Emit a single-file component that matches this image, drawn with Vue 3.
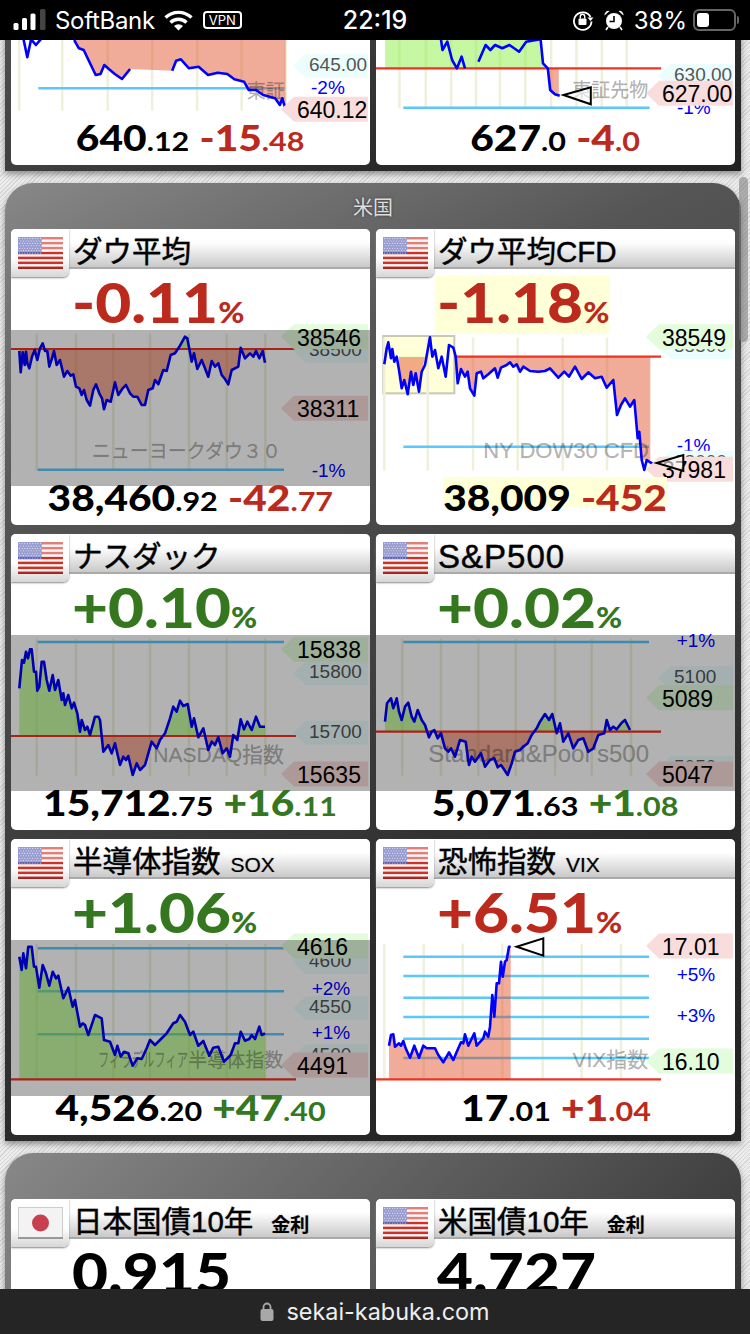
<script setup>
// points below are read off the reference, chart coords get worked out in prep()
const zoomed = (card) => ({ ox: card === 'l' ? 33 : 3, sx: 3, oy: -105, sy: 3 })
const topRow = (card) => ({ ox: card === 'l' ? 23 : 786, sx: 2.09, oy: -510, sy: 3 })

const parse = (str, m) =>
  str.trim().split(/\s+/).map((p) => {
    const [x, y] = p.split(',').map(Number)
    return [(x - m.ox) / m.sx, (y - m.oy) / m.sy - 140]
  })

const prep = (c) => {
  const m = c.map
  const px = (x) => (x - m.ox) / m.sx
  const py = (y) => (y - m.oy) / m.sy - 140
  const lines = c.lines.map((l) => parse(l, m))
  const source = c.fillPts ? parse(c.fillPts, m) : lines.flat()
  const base = py(c.base)
  const last = source[source.length - 1]
  const area = [...source, [last[0], base], [source[0][0], base]]
  const toStr = (a) => a.map((p) => p[0].toFixed(1) + ',' + p[1].toFixed(1)).join(' ')
  const tags = c.tags.map((t) => {
    const cy = py(t.y)
    const main = t.kind !== 'grid'
    const left = main ? 270 : 282
    const h = main ? 12.5 : 12
    return {
      ...t,
      main,
      tx: main ? 286 : 298,
      ty: cy + (main ? 9 : 5),
      poly: `${left},${cy} ${left + 13},${cy - h} 357,${cy - h} 357,${cy + h} ${left + 13},${cy + h}`
    }
  })
  return {
    ...c,
    baseY: base,
    baseX: [px(c.baseX[0]), px(c.baseX[1])],
    linesStr: lines.map(toStr),
    areaStr: toStr(area),
    gridX: c.grid.map(px),
    gridY: [py(c.gridY[0]), py(c.gridY[1])],
    hlineY: (c.hlines || []).map(py),
    hlineX: [px(c.hlineX[0]), px(c.hlineX[1])],
    tagList: tags,
    rates: (c.rates || []).map((r) => ({ t: r.t, x: px(r.x), y: py(r.y) })),
    markerStr: c.marker ? toStr(parse(c.marker, m)) : '',
    boxRect: c.box ? { x: px(c.box[0]), y: py(c.box[1]), w: (c.box[2] - c.box[0]) / m.sx, h: (c.box[3] - c.box[1]) / m.sy } : null,
    mark: { ...c.mark, x: px(c.mark.x), y: py(c.mark.y) }
  }
}

const dowGrid = [110, 228, 340, 450, 567, 680, 796]
const spGrid = [82, 198, 310, 422, 540, 650, 768]

const topCards = [
  {
    id: 'tse', title: '東証', flag: 'jp', value: '640', dec: '.12', ch: '-15', chDec: '.48', dir: 'down',
    chart: prep({
      id: 'tse', map: topRow('l'), base: 100, baseX: [23, 23],
      lines: ['48,110 57,172 65,118 75,135 85,118', '155,120 165,145 175,150 190,195 200,225 210,222 218,195 228,208 240,222 255,237 272,207', '360,212 368,182 378,178 395,205 415,200 435,225 455,218 475,222 490,238 510,245 520,270 535,270 550,285 575,295 585,315 590,295 597,328'],
      fillPts: '155,100 155,120 165,145 175,150 190,195 200,225 210,222 218,195 228,208 240,222 255,237 272,207 360,212 368,182 378,178 395,205 415,200 435,225 455,218 475,222 490,238 510,245 520,270 535,270 550,285 575,295 585,315 590,295 597,328',
      grid: [40, 130, 225, 318, 412, 505, 597], gridY: [100, 332], hlines: [265], hlineX: [80, 595],
      rates: [{ t: '-2%', x: 650, y: 283 }],
      tags: [{ t: '645.00', y: 197, kind: 'grid' }, { t: '640.12', y: 328, kind: 'down' }],
      mark: { t: '東証', x: 595, y: 293, size: 19 }, up: 'red'
    })
  },
  {
    id: 'tsef', title: '東証先物', flag: 'jp', value: '627', dec: '.0', ch: '-4', chDec: '.0', dir: 'down',
    chart: prep({
      id: 'tsef', map: topRow('r'), base: 205, baseX: [786, 1382],
      lines: ['920,100 925,150 935,125 945,180 955,205 965,170 972,205', '1000,185 1015,135 1025,150 1035,135 1050,145 1065,135 1085,155 1100,125 1130,118 1135,190 1145,205 1150,270 1160,283 1170,287'],
      fillPts: '805,100 1132,100 1135,190 1145,205 1150,270 1160,283 1168,287',
      grid: [835, 890, 943, 995, 1045, 1098, 1152, 1205, 1258, 1310], gridY: [100, 325], hlines: [323], hlineX: [843, 1358],
      rates: [{ t: '-1%', x: 1415, y: 343 }],
      tags: [{ t: '630.00', y: 228, kind: 'grid' }, { t: '627.00', y: 280, kind: 'down' }],
      marker: '1178,285 1235,262 1235,313',
      mark: { t: '東証先物', x: 1355, y: 290, size: 19 }
    })
  }
]

const usCards = [
  {
    id: 'dow', title: 'ダウ平均', flag: 'us', pct: '-0.11', value: '38,460', dec: '.92', ch: '-42', chDec: '.77', dir: 'down',
    chart: prep({
      id: 'dow', map: zoomed('l'), closed: true, base: 372, baseX: [33, 888],
      lines: ['58,378 62,442 68,382 74,420 78,380 82,415 88,430 96,395 104,375 112,405 120,370 128,355 135,378 142,378 148,425 156,400 162,378 170,420 180,405 192,455 202,438 212,452 220,448 228,485 238,490 245,510 252,495 260,525 270,542 280,495 288,478 298,505 306,520 312,553 320,525 332,530 345,472 355,510 368,490 378,480 390,505 400,515 412,515 425,540 435,540 445,495 458,490 465,465 475,478 490,435 500,438 512,390 525,385 540,362 555,335 562,340 575,410 582,385 592,432 605,405 625,455 635,408 645,425 655,415 665,450 675,462 685,478 695,435 715,425 722,368 735,400 750,385 760,395 768,378 778,400 788,378 795,413'],
      grid: dowGrid, gridY: [326, 737], hlines: [734], hlineX: [113, 852],
      rates: [{ t: '-1%', x: 935, y: 755 }],
      tags: [{ t: '38500', y: 377, kind: 'grid' }, { t: '38546', y: 335, kind: 'up' }, { t: '38311', y: 550, kind: 'down' }],
      mark: { t: 'ニューヨークダウ３０', x: 843, y: 700, size: 19 }
    })
  },
  {
    id: 'cfd', title: 'ダウ平均CFD', flag: 'us', pct: '-1.18', value: '38,009', dec: '', ch: '-452', chDec: '', dir: 'down', hl: true,
    chart: prep({
      id: 'cfd', map: zoomed('r'), base: 395, baseX: [238, 858],
      lines: ['28,418 35,370 40,352 48,400 52,372 58,410 65,395 72,435 80,490 88,465 98,508 108,440 115,480 122,445 132,500 140,440 150,420 165,337 172,395 180,375 190,430 200,395 212,455 222,360 235,368 242,395 248,475 258,432 270,455 278,440 285,490 298,512 305,445 318,440 325,460 340,448 360,430 368,458 378,428 395,420 405,412 415,425 425,418 435,440 445,425 465,438 490,440 510,438 525,430 550,458 568,440 582,455 600,425 620,462 640,442 660,460 680,455 695,488 715,465 726,570 738,540 750,520 765,545 778,525 788,640 793,620 800,705 808,735 815,705 832,716'],
      fillPts: '72,395 72,435 80,490 88,465 98,508 108,440 115,480 122,445 132,500 140,440 150,395 242,395 248,475 258,432 270,455 278,440 285,490 298,512 305,445 318,440 325,460 340,448 360,430 368,458 378,428 395,420 405,412 415,425 425,418 435,440 445,425 465,438 490,440 510,438 525,430 550,458 568,440 582,455 600,425 620,462 640,442 660,460 680,455 695,488 715,465 726,570 738,540 750,520 765,545 778,525 788,640 793,620 800,705 826,705',
      box: [25, 333, 238, 505],
      grid: [28, 158, 294, 428, 563, 696], gridY: [338, 737], hlines: [665], hlineX: [85, 822],
      rates: [{ t: '-1%', x: 905, y: 680 }],
      tags: [{ t: '38500', y: 366, kind: 'grid' }, { t: '38549', y: 335, kind: 'up' }, { t: '38000', y: 713, kind: 'grid' }, { t: '37981', y: 733, kind: 'down' }],
      marker: '845,714 925,690 925,738',
      mark: { t: 'NY DOW30 CFD', x: 822, y: 700, size: 22 }
    })
  },
  {
    id: 'nas', title: 'ナスダック', flag: 'us', pct: '+0.10', value: '15,712', dec: '.75', ch: '+16', chDec: '.11', dir: 'up',
    chart: prep({
      id: 'nas', map: zoomed('l'), closed: true, base: 618, baseX: [33, 888],
      lines: ['58,475 66,390 72,398 78,365 84,385 90,358 95,358 102,425 108,425 112,482 118,470 125,395 132,395 140,450 148,482 158,435 165,480 175,450 185,510 190,490 195,525 205,495 215,535 222,518 232,550 240,605 245,570 255,600 262,590 270,615 285,560 295,560 300,570 310,665 325,645 335,670 345,640 360,705 370,680 378,690 385,678 398,735 410,700 420,720 435,705 445,670 455,635 470,655 480,630 495,610 510,565 520,530 530,545 540,512 550,528 563,522 575,590 582,565 595,622 610,595 625,660 635,635 645,645 655,622 668,670 680,655 690,680 700,615 712,630 722,568 732,598 742,575 755,600 768,560 780,590 795,590'],
      grid: dowGrid, gridY: [326, 737], hlines: [336], hlineX: [113, 852],
      tags: [{ t: '15800', y: 430, kind: 'grid' }, { t: '15700', y: 608, kind: 'grid' }, { t: '15838', y: 358, kind: 'up' }, { t: '15635', y: 732, kind: 'down' }],
      mark: { t: 'NASDAQ指数', x: 852, y: 697, size: 21 }
    })
  },
  {
    id: 'sp', title: 'S&P500', titleWide: true, flag: 'us', pct: '+0.02', value: '5,071', dec: '.63', ch: '+1', chDec: '.08', dir: 'up',
    chart: prep({
      id: 'sp', map: zoomed('r'), closed: true, base: 605, baseX: [3, 858],
      lines: ['30,575 36,520 48,505 55,535 65,505 72,545 80,570 90,530 100,518 110,560 118,575 128,540 140,570 150,585 162,622 170,605 178,600 188,625 198,610 210,655 220,665 228,655 240,680 255,630 272,635 282,705 290,680 300,695 318,670 330,710 345,690 358,685 368,712 378,705 385,715 398,735 410,700 420,665 435,660 445,650 458,640 470,615 485,595 495,575 510,552 522,570 532,552 545,610 555,580 565,635 580,610 595,655 610,630 625,625 640,665 655,655 670,615 688,610 695,570 705,600 715,590 725,598 740,578 750,570 765,600'],
      grid: spGrid, gridY: [326, 737], hlines: [336], hlineX: [85, 822],
      rates: [{ t: '+1%', x: 905, y: 352 }],
      tags: [{ t: '5100', y: 445, kind: 'grid' }, { t: '5050', y: 713, kind: 'grid' }, { t: '5089', y: 503, kind: 'up' }, { t: '5047', y: 732, kind: 'down' }],
      mark: { t: "Standard&Poor's500", x: 822, y: 697, size: 24 }
    })
  },
  {
    id: 'sox', title: '半導体指数', sub: 'SOX', flag: 'us', pct: '+1.06', value: '4,526', dec: '.20', ch: '+47', chDec: '.40', dir: 'up',
    chart: prep({
      id: 'sox', map: zoomed('l'), closed: true, base: 733, baseX: [33, 888],
      lines: ['58,365 65,405 70,355 78,400 85,335 95,335 102,395 108,395 118,458 128,390 138,415 148,452 158,410 168,430 175,422 190,490 205,458 218,515 225,495 240,575 248,565 255,570 265,600 285,540 305,550 312,615 330,620 345,660 352,632 362,665 372,650 385,655 398,692 412,670 425,672 440,640 450,615 465,630 480,615 500,595 520,565 530,560 540,540 555,560 570,600 580,590 595,632 610,618 628,662 640,638 655,635 672,680 692,660 705,625 715,625 722,590 735,617 748,612 755,600 765,612 778,575 785,600 795,595'],
      grid: dowGrid, gridY: [326, 737], hlines: [340, 469, 598], hlineX: [113, 852],
      rates: [{ t: '+2%', x: 935, y: 480 }, { t: '+1%', x: 935, y: 612 }],
      tags: [{ t: '4600', y: 381, kind: 'grid' }, { t: '4550', y: 520, kind: 'grid' }, { t: '4500', y: 664, kind: 'grid' }, { t: '4616', y: 333, kind: 'up' }, { t: '4491', y: 690, kind: 'down' }],
      mark: { t: '半導体指数', x: 850, y: 697, size: 19, pre: 'フィラデルフィア', preX: 295 }
    })
  },
  {
    id: 'vix', title: '恐怖指数', sub: 'VIX', flag: 'us', pct: '+6.51', value: '17', dec: '.01', ch: '+1', chDec: '.04', dir: 'down', sign: true,
    chart: prep({
      id: 'vix', map: zoomed('r'), base: 733, baseX: [3, 858], up: 'red',
      lines: ['42,632 48,600 55,598 60,635 72,625 78,632 85,618 92,640 105,668 118,632 132,668 145,632 155,640 165,640 180,640 190,660 205,682 222,652 235,675 250,640 258,622 265,625 270,598 280,632 298,595 305,632 325,610 330,590 340,605 345,575 352,480 358,545 365,445 372,445 378,380 383,425 390,380 395,375 402,335 407,335'],
      grid: [28, 146, 263, 382, 503, 620, 738], gridY: [326, 733], hlines: [365, 423, 488, 546, 611, 669], hlineX: [85, 822],
      rates: [{ t: '+5%', x: 905, y: 438 }, { t: '+3%', x: 905, y: 562 }],
      tags: [{ t: '17.01', y: 333, kind: 'down' }, { t: '16.10', y: 678, kind: 'up' }],
      marker: '425,335 505,310 505,362',
      mark: { t: 'VIX指数', x: 820, y: 697, size: 21 }
    })
  }
]

const bondCards = [
  { id: 'jgb', title: '日本国債10年', sub: '金利', subJa: true, flag: 'jp', pct: '0.915', dir: 'flat' },
  { id: 'ust', title: '米国債10年', sub: '金利', subJa: true, flag: 'us', pct: '4.727', dir: 'flat' }
]

const panels = [
  { id: 'jp', title: '日本', cls: 'first', cards: topCards },
  { id: 'us', title: '米国', cls: '', cards: usCards },
  { id: 'bond', title: '', cls: 'last', cards: bondCards }
]

const upColor = (c) => (c.up === 'red' ? 'rgba(225,70,30,.45)' : 'rgba(140,240,70,.5)')
const stripes = [0, 1, 2, 3, 4, 5, 6, 7, 8, 9, 10, 11, 12]
const stars = []
for (let r = 0; r < 7; r++) for (let k = 0; k < 9; k++) stars.push([1.6 + k * 2.6 + (r % 2) * 1.3, 1.6 + r * 2.4])
</script>

<template>
  <div class="page">
    <header class="status">
      <div class="st-left">
        <svg class="signal" width="33" height="22" viewBox="0 0 33 22">
          <rect x="0.5" y="14" width="5" height="7" rx="1.5" fill="#fff" />
          <rect x="9" y="9" width="5" height="12" rx="1.5" fill="#fff" />
          <rect x="17.5" y="4.500" width="5" height="16.500" rx="1.500" fill="#fff" />
          <rect x="27" y="0" width="5.500" height="21" rx="1.500" fill="#444" />
        </svg>
        <span class="carrier">SoftBank</span>
        <svg class="wifi" width="29" height="22" viewBox="0 0 29 22">
          <path d="M1.5 8.500A19 19 0 0 1 27.500 8.500" fill="none" stroke="#fff" stroke-width="3.400" />
          <path d="M6.500 13.500A11.500 11.500 0 0 1 22.500 13.500" fill="none" stroke="#fff" stroke-width="3.400" />
          <path d="M14.500 21.500L10 17A6.500 6.500 0 0 1 19 17Z" fill="#fff" />
        </svg>
        <span class="vpn">VPN</span>
      </div>
      <div class="time">22:19</div>
      <div class="st-right">
        <svg width="22" height="22" viewBox="0 0 22 22">
          <path d="M18.500 8A8.800 8.800 0 1 0 19.500 12.500" fill="none" stroke="#fff" stroke-width="1.800" />
          <path d="M15.500 8.500h6l-3 3.500z" fill="#fff" />
          <rect x="6.500" y="9.500" width="8" height="6.500" rx="1" fill="#fff" />
          <path d="M8.300 9.500V7.500a2.200 2.200 0 0 1 4.400 0V9.500" fill="none" stroke="#fff" stroke-width="1.400" />
        </svg>
        <svg class="alarm" width="22" height="22" viewBox="0 0 22 22">
          <circle cx="11" cy="12" r="8" fill="#fff" />
          <path d="M11 7v5.500H6.500" fill="none" stroke="#000" stroke-width="1.600" />
          <path d="M1.500 6.500A4 4 0 0 1 6.500 2zM20.500 6.500A4 4 0 0 0 15.500 2z" fill="#fff" />
          <path d="M5 18l-2 3M17 18l2 3" stroke="#fff" stroke-width="1.600" />
        </svg>
        <span class="batt-pct">38%</span>
        <span class="battery"><span class="batt-fill"></span></span>
        <span class="batt-nub"></span>
      </div>
    </header>

    <main class="content">
      <section v-for="p in panels" :key="p.id" class="panel" :class="p.cls">
        <div class="panel-title">{{ p.title }}</div>
        <div class="grid">
          <article v-for="c in p.cards" :key="c.id" class="card">
            <div class="card-head">
              <div class="flag-tab">
                <svg v-if="c.flag === 'us'" class="flag" width="45" height="32" viewBox="0 0 45 32">
                  <rect width="45" height="32" fill="#f4f4f4" />
                  <rect v-for="s in stripes" v-show="s % 2 === 0" :key="s" y="0" :transform="`translate(0 ${s * 2.46})`" width="45" height="2.46" fill="#cf3127" />
                  <rect width="24" height="17" fill="#5a5fb0" />
                  <circle v-for="(st, i) in stars" :key="i" :cx="st[0]" :cy="st[1]" r=".55" fill="#dfe0f4" />
                  <rect width="45" height="15" fill="#fff" opacity=".38" />
                  <rect y="30.500" width="45" height="1.500" fill="#7a1d18" opacity=".6" />
                </svg>
                <svg v-else class="flag" width="45" height="32" viewBox="0 0 45 32">
                  <rect x=".5" y=".5" width="44" height="31" fill="#f3f3f3" stroke="#ccc" />
                  <rect y="30" width="45" height="2" fill="#999" />
                  <circle cx="22.500" cy="16" r="8.500" fill="#c8404f" />
                </svg>
              </div>
              <h2 class="title" :class="{ wide: c.titleWide }">{{ c.title }}<small v-if="c.sub" class="sub" :class="{ ja: c.subJa }">{{ c.sub }}</small></h2>
            </div>

            <div class="pct-row" :class="c.dir">
              <span v-if="c.pct" class="pct" :class="{ hl: c.hl }">{{ c.pct }}<small v-if="c.dir !== 'flat'">%</small></span>
            </div>

            <svg v-if="c.chart" class="chart" width="359" height="156" viewBox="0 0 359 156">
              <defs>
                <linearGradient :id="'fill-' + c.id" gradientUnits="userSpaceOnUse" x1="0" x2="0" :y1="c.chart.baseY - 1" :y2="c.chart.baseY + 1">
                  <stop offset=".5" :stop-color="upColor(c.chart)" />
                  <stop offset=".5" stop-color="rgba(225,70,30,.45)" />
                </linearGradient>
              </defs>
              <rect v-if="c.chart.boxRect" :x="c.chart.boxRect.x" :y="c.chart.boxRect.y" :width="c.chart.boxRect.w" :height="c.chart.boxRect.h" fill="#ffffd8" stroke="#c8c8b4" stroke-width="2" />
              <line v-for="x in c.chart.gridX" :key="x" :x1="x" :x2="x" :y1="c.chart.gridY[0]" :y2="c.chart.gridY[1]" class="vgrid" />
              <line v-for="y in c.chart.hlineY" :key="y" :x1="c.chart.hlineX[0]" :x2="c.chart.hlineX[1]" :y1="y" :y2="y" class="hline" />
              <polygon :points="c.chart.areaStr" :fill="`url(#fill-${c.id})`" />
              <text class="mark" :x="c.chart.mark.x" :y="c.chart.mark.y" :font-size="c.chart.mark.size" text-anchor="end">{{ c.chart.mark.t }}</text>
              <text v-if="c.chart.mark.pre" class="mark" x="87" :y="c.chart.mark.y" font-size="19" textLength="90" lengthAdjust="spacingAndGlyphs">{{ c.chart.mark.pre }}</text>
              <line class="base" :x1="c.chart.baseX[0]" :x2="c.chart.baseX[1]" :y1="c.chart.baseY" :y2="c.chart.baseY" />
              <polyline v-for="(l, i) in c.chart.linesStr" :key="i" :points="l" class="price" />
              <text v-for="r in c.chart.rates" :key="r.t" class="rate" :x="r.x" :y="r.y">{{ r.t }}</text>
              <g v-for="t in c.chart.tagList" :key="t.t">
                <polygon :points="t.poly" :class="'tag-' + t.kind" />
                <text :class="t.main ? 'tag-main' : 'tag-grid'" :x="t.tx" :y="t.ty">{{ t.t }}</text>
              </g>
              <polygon v-if="c.chart.markerStr" :points="c.chart.markerStr" class="marker" />
              <rect v-if="c.chart.closed" class="closed" x="0" y="0" width="359" height="156" />
            </svg>

            <div v-if="c.value" class="bottom">
              <span class="values" :class="{ hl: c.hl }">
                <span class="val">{{ c.value }}<small>{{ c.dec }}</small></span>
                <span class="chg" :class="c.dir">{{ c.ch }}<small>{{ c.chDec }}</small></span>
              </span>
            </div>
          </article>
        </div>
      </section>
      <div class="scroll-thumb"></div>
    </main>

    <footer class="url-bar">
      <svg width="14" height="19" viewBox="0 0 14 19">
        <rect x="0.500" y="7" width="13" height="12" rx="2" fill="#a8a8a8" />
        <path d="M3.500 8V5a3.500 3.500 0 0 1 7 0v3" fill="none" stroke="#a8a8a8" stroke-width="1.800" />
      </svg>
      <span>sekai-kabuka.com</span>
    </footer>
  </div>
</template>

<style scoped>
.page {
  width: 750px;
  height: 1334px;
  display: flex;
  flex-direction: column;
  overflow: hidden;
  font-family: Lato, "Noto Sans CJK JP", sans-serif;
}

.status {
  height: 40px;
  flex: none;
  position: relative;
  z-index: 2;
  background: #000;
  color: #fff;
  display: grid;
  grid-template-columns: 1fr auto 1fr;
  align-items: center;
  font-family: Inter, Roboto, sans-serif;
}
.st-left {
  display: flex;
  align-items: center;
  padding-left: 13px;
}
.carrier {
  font-size: 24px;
  margin-left: 9px;
  letter-spacing: -.3px;
}
.wifi { margin-left: 9px; }
.vpn {
  margin-left: 10px;
  width: 39px;
  height: 18px;
  box-sizing: border-box;
  border: 2px solid #fff;
  border-radius: 4px;
  font-size: 13px;
  line-height: 14px;
  text-align: center;
}
.time {
  font-size: 25px;
  font-weight: 500;
}
.st-right {
  display: flex;
  align-items: center;
  justify-content: flex-end;
  padding-right: 11px;
}
.alarm { margin-left: 9px; }
.batt-pct {
  font-size: 24px;
  margin-left: 9px;
}
.battery {
  margin-left: 6px;
  width: 43px;
  height: 22px;
  box-sizing: border-box;
  border: 2px solid #666;
  border-radius: 6px;
  padding: 2px;
}
.batt-fill {
  display: block;
  width: 12px;
  height: 14px;
  background: #fff;
  border-radius: 3px;
}
.batt-nub {
  width: 2px;
  height: 8px;
  margin-left: 1px;
  background: #666;
  border-radius: 0 2px 2px 0;
}

.content {
  flex: 1;
  min-height: 0;
  position: relative;
  overflow: hidden;
  padding: 0 9px 0 5px;
  background: repeating-linear-gradient(135deg, #d6d6d6 0, #d6d6d6 1px, #ececec 1px, #ececec 3px);
}
.scroll-thumb {
  position: absolute;
  top: 137px;
  right: 2px;
  width: 9px;
  height: 165px;
  border-radius: 5px;
  background: rgba(120, 120, 120, .55);
}

.panel {
  border-radius: 28px 28px 0 0;
  padding: 0 6px 6px;
  margin-bottom: 12px;
  background: linear-gradient(155deg, #888 0, #555 25%, #2a2a2a 75%, #222 100%);
  box-shadow: 0 3px 6px rgba(0, 0, 0, .4);
}
.panel.first {
  margin-top: -217px;
}
.panel.last {
  background: linear-gradient(135deg, #888, #222);
}
.panel-title {
  height: 46px;
  line-height: 48px;
  text-align: center;
  font-size: 20px;
  color: #ddd;
  text-shadow: 0 0 3px rgba(0, 0, 0, .5);
}
.grid {
  display: grid;
  grid-template-columns: 359px 359px;
  column-gap: 6px;
  row-gap: 9px;
}

.card {
  position: relative;
  height: 296px;
  background: #fff;
  border-radius: 5px;
}
.card-head {
  height: 40px;
  box-sizing: border-box;
  border-bottom: 2px solid #aaa;
  border-radius: 5px 5px 0 0;
  background: linear-gradient(#fff 35%, #c9c9c9);
  padding-left: 62px;
}
.flag-tab {
  position: absolute;
  left: 0;
  top: 0;
  width: 58px;
  height: 48px;
  box-sizing: border-box;
  padding: 8px 0 0 7px;
  border-radius: 5px 0 6px 0;
  background: linear-gradient(#fff, #fff 60%, #d6d6d6);
  box-shadow: 0 1px 2px #888;
}
.flag { display: block; }
.title {
  margin: 0;
  font-family: "Liberation Sans", "Noto Sans CJK JP", sans-serif;
  font-size: 29.5px;
  font-weight: 400;
  line-height: 46px;
  color: #000;
  text-shadow: 0 0 2px #fff, 0 0 1px #000;
  -webkit-text-stroke: .3px #000;
  white-space: nowrap;
}
.title.wide {
  font-size: 33px;
  letter-spacing: 1px;
}
.sub {
  font-size: 21px;
  margin-left: 10px;
  -webkit-text-stroke: 0;
}
.sub.ja {
  font-size: 19px;
  font-weight: 700;
  margin-left: 18px;
}

.pct-row {
  height: 61px;
  padding-left: 61px;
  line-height: 66px;
  font-size: 55px;
  font-weight: 900;
}
.pct {
  position: relative;
  z-index: 0;
  display: inline-block;
  transform: scaleX(1.13);
  transform-origin: left;
}
.pct small {
  font-size: 28px;
}
.pct.hl::before {
  content: "";
  position: absolute;
  z-index: -1;
  left: -2px;
  right: 0;
  top: 7px;
  height: 58px;
  background: #ffffd8;
}
.up { color: #35771f; }
.down { color: #bb2a1d; }
.flat { color: #000; }

.chart {
  display: block;
  overflow: visible;
}
.vgrid {
  stroke: #efefdc;
  stroke-width: 2.5;
}
.hline {
  stroke: #5ac8fa;
  stroke-width: 2.5;
}
.base {
  stroke: #ee3322;
  stroke-width: 2.2;
}
.price {
  fill: none;
  stroke: #0000ff;
  stroke-width: 2.6;
  stroke-linejoin: round;
}
.mark {
  fill: rgba(0, 0, 0, .3);
  stroke: rgba(0, 0, 0, .12);
  stroke-width: .6;
  font-family: "Liberation Sans", "Noto Sans CJK JP", sans-serif;
}
.rate {
  fill: #0000ff;
  font-family: "Liberation Sans", sans-serif;
  font-size: 19px;
}
.tag-up { fill: #e2fcdc; }
.tag-down { fill: #f9dcdc; }
.tag-grid { fill: #555; }
polygon.tag-grid { fill: #ebfdfd; }
.tag-main {
  fill: #000;
  font-family: "Liberation Sans", sans-serif;
  font-size: 23px;
}
text.tag-grid {
  font-family: "Liberation Sans", sans-serif;
  font-size: 19px;
}
.marker {
  fill: #fff;
  fill-opacity: .6;
  stroke: #000;
  stroke-width: 2;
}
.closed {
  fill: rgba(0, 0, 0, .3);
}

.bottom {
  height: 39px;
  text-align: center;
  line-height: 23px;
  font-size: 36px;
  font-weight: 900;
  color: #000;
  white-space: nowrap;
}
.values {
  position: relative;
  z-index: 0;
  display: inline-block;
  transform: scaleX(1.13);
}
.values.hl::before {
  content: "";
  position: absolute;
  z-index: -1;
  left: 0;
  right: 0;
  top: -9px;
  height: 30px;
  background: #ffffd8;
}
.bottom small {
  font-size: 27px;
  font-weight: 700;
}
.chg {
  margin-left: 9px;
}

.url-bar {
  height: 45px;
  flex: none;
  background: #252525;
  color: #eee;
  display: flex;
  align-items: center;
  justify-content: center;
  gap: 12px;
  font-family: Inter, Roboto, sans-serif;
  font-size: 23.4px;
}
</style>

<style>
body {
  margin: 0;
}
</style>
